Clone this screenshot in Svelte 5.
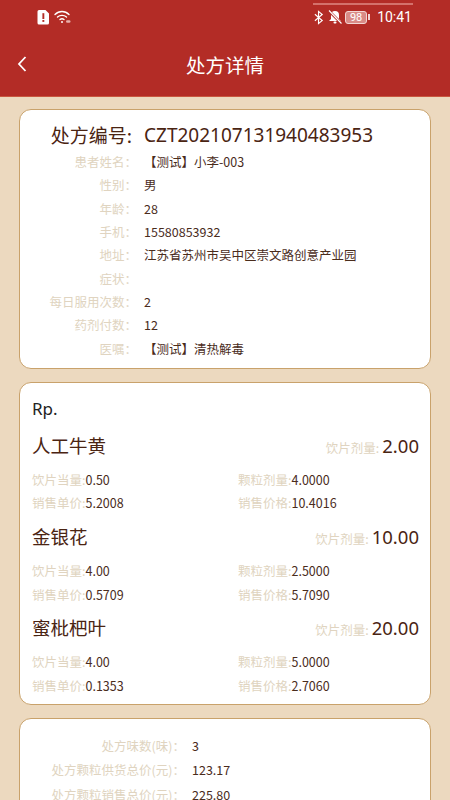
<script>
  const info = [
    ['患者姓名', '【测试】小李-003'],
    ['性别', '男'],
    ['年龄', '28'],
    ['手机', '15580853932'],
    ['地址', '江苏省苏州市吴中区崇文路创意产业园'],
    ['症状', ''],
    ['每日服用次数', '2'],
    ['药剂付数', '12'],
    ['医嘱', '【测试】清热解毒']
  ];
  const drugs = [
    { name: '人工牛黄', dose: '2.00', eq: '0.50', gran: '4.0000', unit: '5.2008', price: '10.4016' },
    { name: '金银花', dose: '10.00', eq: '4.00', gran: '2.5000', unit: '0.5709', price: '5.7090' },
    { name: '蜜枇杷叶', dose: '20.00', eq: '4.00', gran: '5.0000', unit: '0.1353', price: '2.7060' }
  ];
  const totals = [
    ['处方味数(味)', '3'],
    ['处方颗粒供货总价(元)', '123.17'],
    ['处方颗粒销售总价(元)', '225.80']
  ];
</script>

<div class="page">
  <header class="head">
    <span class="glow"></span>
    <div class="status">
      <div class="status-left">
        <svg width="13" height="15" viewBox="0 0 13 15"><path d="M2 0h6.500L12 3.500V13a1.500 1.500 0 0 1-1.500 1.500h-8.500A1.500 1.500 0 0 1 .5 13V1.500A1.500 1.500 0 0 1 2 0z" fill="#fff"/><rect x="5.400" y="3.200" width="1.900" height="5.800" fill="#b32c26"/><rect x="5.400" y="10" width="1.900" height="1.900" fill="#b32c26"/></svg>
        <svg width="17" height="14" viewBox="0 0 17 14" fill="none" stroke="#fff" stroke-width="1.400" stroke-linecap="round"><path d="M1 4.500C5 .5 11 .5 15 4.500"/><path d="M3.500 7C6 4.800 10 4.800 12.500 7"/><path d="M6 9.500C7.200 8.500 8.800 8.500 10 9.500"/><circle cx="8" cy="12" r="1" fill="#fff" stroke="none"/><rect x="12" y="10.200" width="4.500" height="2.600" rx="1.300" fill="#e8b0ac" stroke="none"/></svg>
      </div>
      <div class="status-right">
        <svg width="10" height="15" viewBox="0 0 11 15" fill="none" stroke="#fff" stroke-width="1.300"><path d="M1 4l8 6.800-4 3.400V.8l4 3.400L1 11"/></svg>
        <svg class="bell" width="14" height="14" viewBox="0 0 14 14"><path d="M7 1a4 4 0 0 1 4 4v4l2 2H1l2-2V5a4 4 0 0 1 4-4z" fill="#fff"/><rect x="5.500" y="11.600" width="3" height="1.800" rx=".9" fill="#fff"/><path d="M1 1l12 12" stroke="#b32c26" stroke-width="2.600"/><path d="M1 .5l12.500 13" stroke="#fff" stroke-width="1.100"/></svg>
        <span class="battery"><span class="batt-num">98</span></span><span class="nub"></span>
        <span class="time">10:41</span>
      </div>
    </div>
    <div class="bar">
      <svg class="back" width="10" height="16" viewBox="0 0 10 16" fill="none" stroke="#fff" stroke-width="1.800"><path d="M8.500 1L2 8l6.500 7"/></svg>
      <h1>处方详情</h1>
    </div>
  </header>

  <main class="content">
    <section class="card first">
      <div class="code"><span class="code-label">处方编号:</span><span class="code-value">CZT202107131940483953</span></div>
      {#each info as [label, value]}
        <div class="row">
          <span class="label">{label}：</span>
          <span class="value">{value}</span>
        </div>
      {/each}
    </section>

    <section class="card second">
      <div class="rp">Rp.</div>
      {#each drugs as d}
        <div class="drug">
          <div class="drug-top">
            <span class="drug-name">{d.name}</span>
            <span class="dose"><span class="label">饮片剂量:</span><span class="dose-num">{d.dose}</span></span>
          </div>
          <div class="grid">
            <div><span class="label">饮片当量:</span><span class="value">{d.eq}</span></div>
            <div><span class="label">颗粒剂量:</span><span class="value">{d.gran}</span></div>
            <div><span class="label">销售单价:</span><span class="value">{d.unit}</span></div>
            <div><span class="label">销售价格:</span><span class="value">{d.price}</span></div>
          </div>
        </div>
      {/each}
    </section>

    <section class="card third">
      {#each totals as [label, value]}
        <div class="trow">
          <span class="label">{label}：</span>
          <span class="value">{value}</span>
        </div>
      {/each}
    </section>
  </main>
</div>

<style>
  :global(body) {
    margin: 0;
    background: #ecd9bf;
    overflow: hidden;
  }
  .page {
    width: 450px;
    height: 800px;
    overflow: hidden;
    background: #ecd9bf;
    font-family: "Noto Sans CJK SC", "Noto Sans", sans-serif;
    color: #4a2412;
  }
  .head {
    height: 96px;
    background: #b32c26;
    color: #fff;
    border-bottom: 1px solid #c9573f;
    position: relative;
  }
  .glow {
    position: absolute;
    left: 313px;
    top: 2.500px;
    width: 100px;
    height: 2px;
    background: #d4716b;
  }
  .status {
    height: 34px;
    display: flex;
    justify-content: space-between;
    align-items: center;
    padding: 0 38px 0 37px;
  }
  .status-left, .status-right {
    display: flex;
    align-items: center;
  }
  .status-left { gap: 4px; }
  .bell { margin-left: 4px; }
  .battery {
    width: 20px;
    height: 11px;
    border: 1px solid #f2d6d3;
    border-radius: 3px;
    display: flex;
    align-items: center;
    justify-content: center;
    background: #d98b86;
    margin-left: 3px;
  }
  .batt-num {
    font-family: "Roboto", sans-serif;
    font-size: 11px;
    line-height: 11px;
    color: #fff;
  }
  .nub {
    width: 2px;
    height: 6px;
    background: #f2d6d3;
    margin-left: 1px;
  }
  .time {
    font-family: "Roboto", sans-serif;
    font-size: 14px;
    color: #fff;
    margin-left: 7px;
  }
  .bar {
    height: 62px;
    position: relative;
    display: flex;
    align-items: center;
    justify-content: center;
  }
  .bar h1 {
    margin: 0;
    font-size: 19.500px;
    font-weight: 400;
    line-height: 62px;
  }
  .back {
    position: absolute;
    left: 17px;
    top: 22px;
  }
  .content {
    padding: 12px 19px 0;
    display: flex;
    flex-direction: column;
    gap: 13px;
  }
  .card {
    background: #fff;
    border: 1px solid #c9a26b;
    border-radius: 12px;
    box-sizing: border-box;
  }
  .first {
    height: 260px;
    padding: 13px 0 0;
    flex: none;
  }
  .code {
    display: flex;
    height: 24px;
    margin-bottom: 3px;
    align-items: center;
    font-size: 19px;
    line-height: 24px;
    white-space: nowrap;
    color: #4a2412;
  }
  .code-label {
    width: 112px;
    text-align: right;
    flex: none;
  }
  .code-value {
    margin-left: 12px;
    font-family: "Noto Sans", sans-serif;
  }
  .row {
    display: flex;
    height: 23.300px;
    align-items: center;
    font-size: 12.500px;
    white-space: nowrap;
  }
  .row .label {
    width: 117px;
    text-align: right;
    flex: none;
    margin-right: 7px;
  }
  .label { color: #e0d4c0; }
  .value { color: #4a2c1c; }
  .second {
    height: 323px;
    padding: 14px 11px 0 12px;
    flex: none;
  }
  .rp {
    font-family: "Noto Sans", sans-serif;
    font-size: 17px;
    line-height: 24px;
    color: #222;
  }
  .drug-top {
    display: flex;
    justify-content: space-between;
    align-items: center;
    height: 30px;
    margin-top: 9px;
  }
  .drug + .drug .drug-top { margin-top: 6.500px; }
  .drug-name {
    font-size: 18.500px;
    line-height: 30px;
    color: #4a2412;
  }
  .dose {
    display: flex;
    align-items: center;
    font-size: 12.500px;
  }
  .dose .label { position: relative; top: 2px; }
  .dose-num {
    font-family: "Noto Sans", sans-serif;
    font-size: 18.500px;
    color: #4a2412;
    margin-left: 3px;
  }
  .grid {
    display: grid;
    grid-template-columns: 206px 1fr;
    grid-auto-rows: 23.300px;
    align-items: center;
    margin-top: 8px;
    font-size: 12.500px;
    white-space: nowrap;
  }
  .third {
    height: 200px;
    padding: 14px 0 0;
    flex: none;
  }
  .trow {
    display: flex;
    align-items: center;
    height: 24.500px;
    font-size: 12.500px;
    white-space: nowrap;
  }
  .trow .label {
    width: 165px;
    text-align: right;
    flex: none;
    margin-right: 7px;
  }
</style>
